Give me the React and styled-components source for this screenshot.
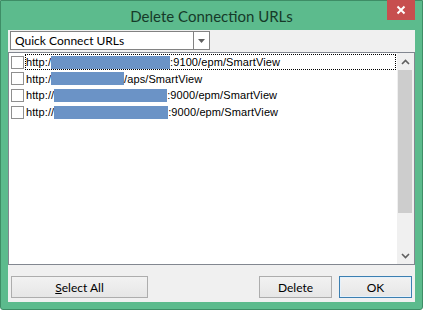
import React from "react";
import styled, { createGlobalStyle } from "styled-components";

const Global = createGlobalStyle`
  html, body { margin: 0; padding: 0; background: #ffffff; }
  body { font-family: Lato, "Noto Sans", sans-serif; }
`;

const Window = styled.div`
  box-sizing: border-box;
  width: 423px;
  height: 310px;
  background: #5cbb8d;
  border: 1px solid #3e8d66;
  border-radius: 0 0 3px 3px;
  display: flex;
  flex-direction: column;
`;

const TitleBar = styled.div`
  height: 29px;
  position: relative;
  display: flex;
  align-items: center;
  justify-content: center;
  font-family: Lato, "Noto Sans", sans-serif;
  font-size: 15px;
  color: #163a29;
`;

const CloseButton = styled.div`
  position: absolute;
  top: -1px;
  right: 7px;
  width: 28px;
  height: 20px;
  background: #c74f4f;
  display: flex;
  align-items: center;
  justify-content: center;
`;

const Client = styled.div`
  flex: 1;
  margin: 0 7px 7px 7px;
  background: #f0f0f0;
  display: flex;
  flex-direction: column;
  padding: 1px 0 3px 0;
  box-sizing: border-box;
`;

const Combo = styled.div`
  margin-left: 2px;
  width: 200px;
  height: 19px;
  box-sizing: border-box;
  border: 1px solid #828282;
  background: #fff;
  display: flex;
  align-items: stretch;
`;

const ComboText = styled.div`
  flex: 1;
  padding-left: 4px;
  font-size: 12px;
  line-height: 17px;
  color: #000;
  font-family: Lato, "Noto Sans", sans-serif;
`;

const ComboButton = styled.div`
  width: 15px;
  border-left: 1px solid #828282;
  background: #fff;
  display: flex;
  align-items: center;
  justify-content: center;
`;

const ListBox = styled.div`
  margin-top: 2px;
  height: 213px;
  box-sizing: border-box;
  border: 1px solid #828790;
  background: #fff;
  display: flex;
`;

const Rows = styled.div`
  flex: 1;
  padding-top: 1px;
  display: flex;
  flex-direction: column;
`;

const Row = styled.div`
  height: 16.6px;
  display: flex;
  align-items: center;
  padding-left: 2px;
`;

const Check = styled.div`
  width: 13px;
  height: 13px;
  box-sizing: border-box;
  border: 1px solid #8f8f8f;
  background: #fff;
  flex: none;
`;

const Label = styled.div`
  margin-left: 1px;
  height: 16px;
  display: flex;
  align-items: center;
  flex: ${(p) => (p.$focus ? 1 : "none")};
  margin-right: ${(p) => (p.$focus ? "1px" : "0")};
  box-sizing: border-box;
  border: 1px dotted ${(p) => (p.$focus ? "#000" : "transparent")};
  font-family: "Liberation Sans", Arial, sans-serif;
  font-size: 11px;
  letter-spacing: 0.1px;
  color: #000;
  white-space: nowrap;
`;

const Redact = styled.span`
  display: inline-block;
  height: 13px;
  background: #6b93c6;
`;

const ScrollBar = styled.div`
  width: 17px;
  background: #f0f0f0;
  display: flex;
  flex-direction: column;
  flex: none;
`;

const Arrow = styled.div`
  height: 17px;
  display: flex;
  align-items: center;
  justify-content: center;
  flex: none;
`;

const Thumb = styled.div`
  margin: 0 2px 0 1px;
  height: 143px;
  background: #cdcdcd;
  flex: none;
`;

const Spacer = styled.div`
  flex: 1;
`;

const ButtonRow = styled.div`
  margin-top: 11px;
  display: flex;
  align-items: center;
  padding: 0 3px 0 3px;
`;

const Button = styled.div`
  box-sizing: border-box;
  width: ${(p) => p.$w}px;
  height: 22px;
  margin-left: ${(p) => p.$ml || 0}px;
  border: 1px solid ${(p) => (p.$default ? "#3c7fb1" : "#adadad")};
  background: linear-gradient(#f2f2f2, #e6e6e6);
  display: flex;
  align-items: center;
  justify-content: center;
  font-family: Lato, "Noto Sans", sans-serif;
  font-size: 12px;
  color: #000;
  ${(p) => p.$default && "box-shadow: inset 0 0 0 1px #e5f1fb;"}
`;

const U = styled.span`
  text-decoration: underline;
`;

const rows = [
  { w: 119, rest: ":9100/epm/SmartView", pre: "http:/" },
  { w: 73, rest: "/aps/SmartView", pre: "http:/" },
  { w: 113, rest: ":9000/epm/SmartView", pre: "http://" },
  { w: 114, rest: ":9000/epm/SmartView", pre: "http://" },
];

export default function App() {
  return (
    <>
      <Global />
      <Window>
        <TitleBar>
          Delete Connection URLs
          <CloseButton>
            <svg width="10" height="10" viewBox="0 0 10 10">
              <path d="M1.5 1.5 L8.5 8.5 M8.5 1.5 L1.5 8.5" stroke="#fff" strokeWidth="2" />
            </svg>
          </CloseButton>
        </TitleBar>
        <Client>
          <Combo>
            <ComboText>Quick Connect URLs</ComboText>
            <ComboButton>
              <svg width="7" height="4" viewBox="0 0 7 4">
                <path d="M0 0 H7 L3.5 4 Z" fill="#606060" />
              </svg>
            </ComboButton>
          </Combo>
          <ListBox>
            <Rows>
              {rows.map((r, i) => (
                <Row key={i}>
                  <Check />
                  <Label $focus={i === 0}>
                    {r.pre}
                    <Redact style={{ width: r.w }} />
                    {r.rest}
                  </Label>
                </Row>
              ))}
            </Rows>
            <ScrollBar>
              <Arrow>
                <svg width="9" height="6" viewBox="0 0 9 6">
                  <path d="M1 5 L4.5 1.5 L8 5" stroke="#606060" strokeWidth="1.6" fill="none" />
                </svg>
              </Arrow>
              <Thumb />
              <Spacer />
              <Arrow>
                <svg width="9" height="6" viewBox="0 0 9 6">
                  <path d="M1 1 L4.5 4.5 L8 1" stroke="#606060" strokeWidth="1.6" fill="none" />
                </svg>
              </Arrow>
            </ScrollBar>
          </ListBox>
          <ButtonRow>
            <Button $w={137}>
              <span><U>S</U>elect All</span>
            </Button>
            <Spacer />
            <Button $w={73}>Delete</Button>
            <Button $w={73} $ml={7} $default>OK</Button>
          </ButtonRow>
        </Client>
      </Window>
    </>
  );
}
